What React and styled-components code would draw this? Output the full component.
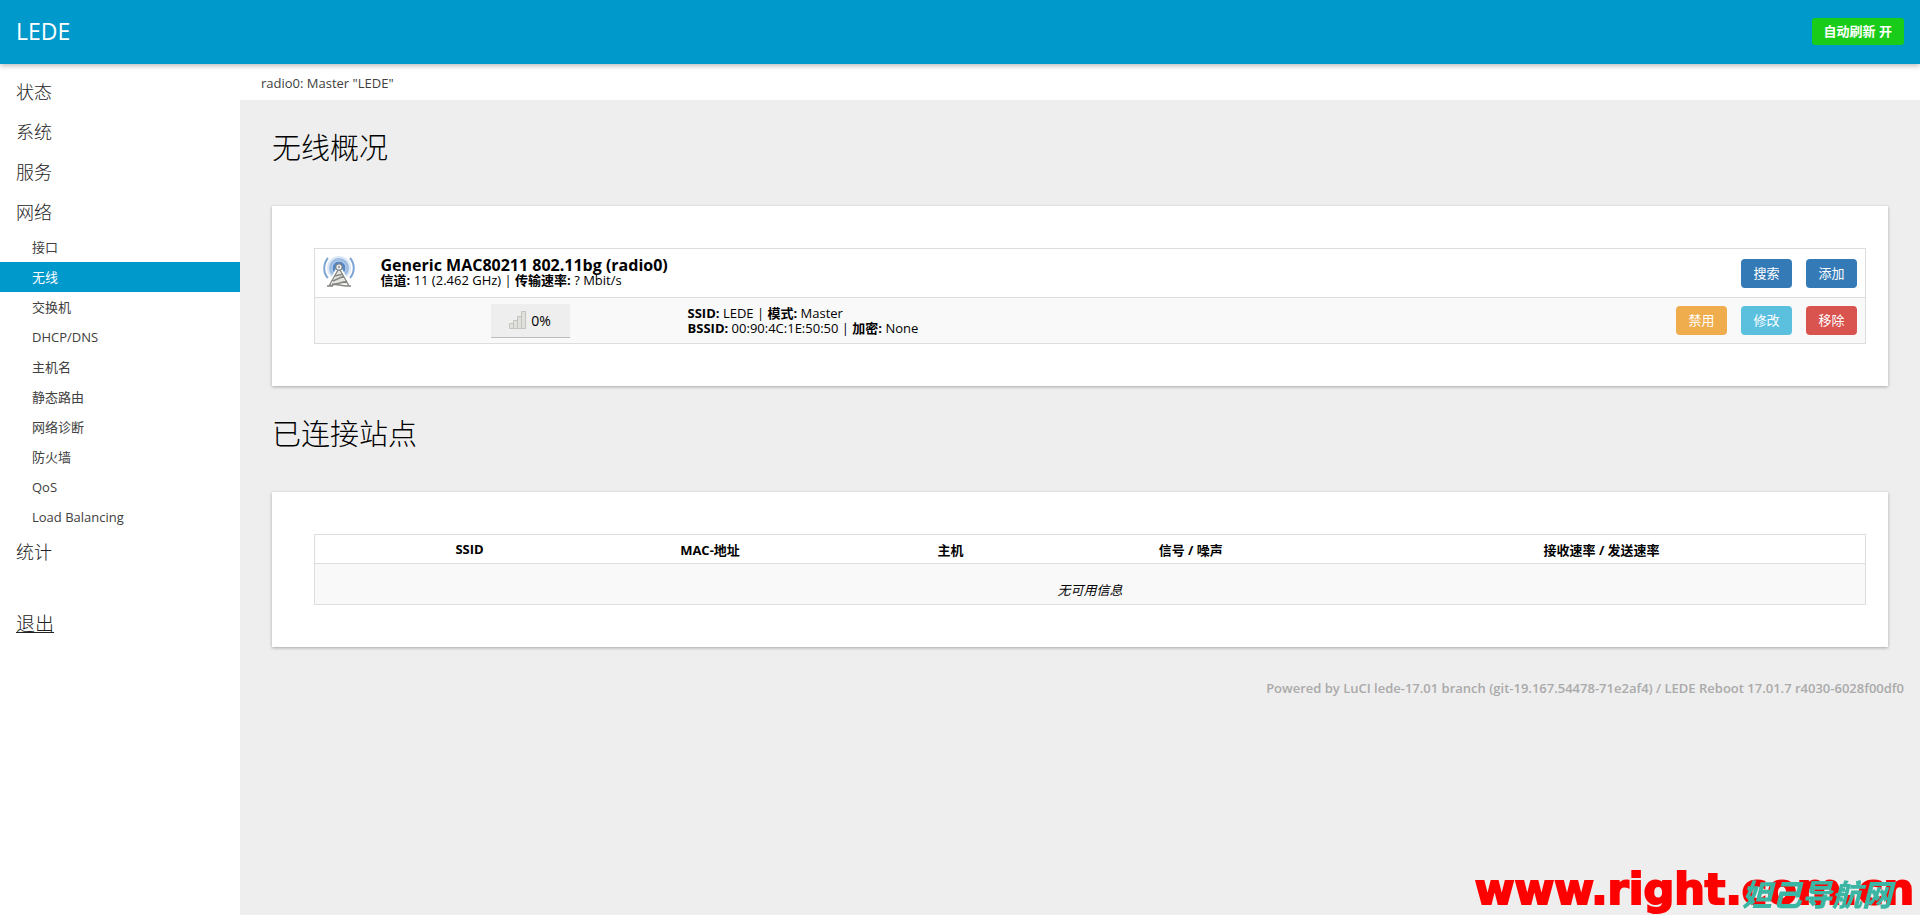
import styled, { createGlobalStyle } from "styled-components";

const PRIMARY_COLOR = "#0099cc";
const TEXT_COLOR = "#404040";
const LINE_COLOR = "#dddddd";

const GlobalStyle = createGlobalStyle`
  * {
    box-sizing: border-box;
  }
  body {
    margin: 0;
    background: #eeeeee;
    color: #000;
    font-family: "Open Sans", "Noto Sans CJK SC", sans-serif;
    font-size: 13px;
  }
`;

/** Layout */
const Page = styled.div`
  display: flex;
  flex-direction: column;
  min-height: 100vh;
`;
const Header = styled.header`
  display: flex;
  align-items: center;
  justify-content: space-between;
  height: 64px;
  padding: 0 16px 2px;
  background: ${PRIMARY_COLOR};
  box-shadow: 0 2px 5px rgba(0, 0, 0, 0.26);
  z-index: 1;
`;
const Brand = styled.a`
  color: white;
  font-size: 23px;
  text-decoration: none;
`;
const RefreshButton = styled.button`
  height: 27px;
  padding: 0 12px;
  border: none;
  border-radius: 3px;
  background: #19cc19;
  color: white;
  font: inherit;
  font-weight: bold;
  line-height: 27px;
`;
const Body = styled.div`
  display: flex;
  flex: 1;
`;
const Main = styled.main`
  flex: 1;
  min-width: 0;
`;
const Container = styled.div`
  padding: 0 32px;
`;

/** Sidebar */
const Sidebar = styled.nav`
  flex: 0 0 240px;
  padding-top: 8px;
  background: white;
`;
const MenuList = styled.ul`
  margin: 0;
  padding: 0;
  list-style: none;
`;
const MenuLink = styled.a`
  display: block;
  padding-left: 16px;
  color: #222222;
  font-size: 18px;
  font-weight: 300;
  line-height: 40px;
  text-decoration: none;
`;
const SubLink = styled.a`
  display: block;
  padding-left: 32px;
  background: ${(props) => (props.$active ? PRIMARY_COLOR : "white")};
  color: ${(props) => (props.$active ? "white" : TEXT_COLOR)};
  line-height: 30px;
  text-decoration: none;
`;
const LogoutLink = styled(MenuLink)`
  margin-top: 32px;
  font-size: 19px;
  text-decoration: underline;
`;

/** Content */
const NetworkTabs = styled.div`
  height: 36px;
  padding-left: 21px;
  background: white;
  line-height: 38px;
`;
const TabLink = styled.a`
  color: ${TEXT_COLOR};
  text-decoration: none;
`;
const Title = styled.h2`
  margin: 0;
  padding: 26px 0 36px;
  font-size: 29px;
  font-weight: 300;
  line-height: 44px;
`;
const Card = styled.section`
  padding: 42px 22px 42px 42px;
  background: white;
  box-shadow: 0 1px 3px rgba(0, 0, 0, 0.3);
`;
const Table = styled.table`
  width: 100%;
  border: 1px solid ${LINE_COLOR};
  border-collapse: collapse;
  table-layout: fixed;
`;
const Row = styled.tr`
  height: ${(props) => props.$height}px;
  background: ${(props) => (props.$shaded ? "#f9f9f9" : "white")};
  border-bottom: 1px solid ${LINE_COLOR};
`;
const Col = styled.col`
  width: ${(props) => props.$width};
`;
const Cell = styled.td`
  padding: 0 4px;
  line-height: 15px;
  text-align: ${(props) => props.$align || "left"};
`;
const IconCell = styled(Cell)`
  padding-left: 8px;
`;
const HeadCell = styled.th`
  padding: 0 4px;
`;
const EmptyCell = styled.td`
  padding: 10px 0 0;
  font-style: italic;
  text-align: center;
`;
const DeviceName = styled.strong`
  display: block;
  font-size: 16px;
`;
const Actions = styled.div`
  display: flex;
  justify-content: flex-end;
  gap: 14px;
  padding-right: 4px;
`;
const ActionButton = styled.button`
  width: 51px;
  height: 29px;
  padding: 0;
  border: none;
  border-radius: 4px;
  background: ${(props) => props.$color};
  color: white;
  font: inherit;
  line-height: 29px;
`;
const SignalBadge = styled.span`
  display: inline-flex;
  align-items: center;
  justify-content: center;
  gap: 5px;
  width: 79px;
  height: 34px;
  background: #eeeeee;
  border-bottom: 1px solid #bbbbbb;
  font-size: 14px;
`;
const Footer = styled.footer`
  padding: 31px 16px;
  color: #aaaaaa;
  font-weight: 600;
  line-height: 20px;
  text-align: right;
`;

/** Site marks over the bottom corner */
const SiteMark = styled.div`
  position: fixed;
  right: 6px;
  bottom: 2px;
  color: red;
  font-family: "DejaVu Sans", sans-serif;
  font-size: 43px;
  font-weight: bold;
  line-height: 48px;
  -webkit-text-stroke: 2px red;
`;
const NavMark = styled.div`
  position: fixed;
  right: 28px;
  bottom: 4px;
  color: #3cb6a4;
  font-family: "Noto Sans CJK SC", sans-serif;
  font-size: 30px;
  font-style: italic;
  font-weight: 900;
  line-height: 36px;
`;

const AntennaIcon = () => (
  <svg width="32" height="32" viewBox="0 0 32 32" fill="none" aria-hidden="true">
    <circle cx="16" cy="12" r="12" fill="#dce8f6" />
    <path d="M5 2C0 8 0 17 5 22M27 2c5 6 5 14 0 20" stroke="#7fa5d4" strokeWidth="2" />
    <circle cx="16" cy="12" r="10" fill="#9dbce2" />
    <circle cx="16" cy="12" r="7" fill="#5487c6" stroke="#c3d8ef" />
    <path d="M15 13 6 30M17 13l9 17" stroke="#fff" strokeWidth="4" />
    <path d="M16 14 9 28h14z" fill="#e4e4e0" />
    <path
      d="M15 14 6 30M17 14l9 16M12 20l8-2M10 25l11-5M6 30l18-5M9 28l14 2M4 30h6M22 30h6"
      stroke="#858781"
      strokeWidth="1.4"
    />
    <circle cx="16" cy="11" r="3.2" fill="#f5f5f3" stroke="#747c85" strokeWidth="1.2" />
    <circle cx="16" cy="11" r="1.2" fill="#9aa0a5" />
  </svg>
);

const SignalIcon = () => (
  <svg width="17" height="18" viewBox="0 0 17 18" aria-hidden="true">
    <g fill="#e0e0dc" stroke="#c4c4be">
      <path d="M.5 12.5h4v5h-4z" />
      <path d="M4.5 9.5h4v8h-4z" />
      <path d="M8.5 5.5h4v12h-4z" />
      <path d="M12.5.5h4v17h-4z" />
    </g>
  </svg>
);

const NETWORK_ITEMS = [
  "接口",
  "无线",
  "交换机",
  "DHCP/DNS",
  "主机名",
  "静态路由",
  "网络诊断",
  "防火墙",
  "QoS",
  "Load Balancing",
];
const MENU = [
  { name: "状态" },
  { name: "系统" },
  { name: "服务" },
  { name: "网络", items: NETWORK_ITEMS },
  { name: "统计" },
];
const STATION_COLUMNS = [
  { name: "", width: "4%" },
  { name: "SSID", width: "12%" },
  { name: "MAC-地址", width: "19%" },
  { name: "主机", width: "12%" },
  { name: "信号 / 噪声", width: "19%" },
  { name: "接收速率 / 发送速率", width: "34%" },
];

const Menu = () => (
  <Sidebar>
    <MenuList>
      {MENU.map(({ name, items }) => (
        <li key={name}>
          <MenuLink href="#">{name}</MenuLink>
          {items && (
            <MenuList>
              {items.map((item) => (
                <li key={item}>
                  <SubLink href="#" $active={item === "无线"}>
                    {item}
                  </SubLink>
                </li>
              ))}
            </MenuList>
          )}
        </li>
      ))}
    </MenuList>
    <LogoutLink href="#">退出</LogoutLink>
  </Sidebar>
);

const WirelessTable = () => (
  <Table>
    <colgroup>
      <Col $width="4%" />
      <Col $width="307px" />
      <Col />
      <Col $width="200px" />
    </colgroup>
    <tbody>
      <Row $height={49}>
        <IconCell>
          <AntennaIcon />
        </IconCell>
        <Cell colSpan={2}>
          <DeviceName>Generic MAC80211 802.11bg (radio0)</DeviceName>
          <strong>信道:</strong> 11 (2.462 GHz) | <strong>传输速率:</strong> ? Mbit/s
        </Cell>
        <Cell>
          <Actions>
            <ActionButton $color="#337ab7">搜索</ActionButton>
            <ActionButton $color="#337ab7">添加</ActionButton>
          </Actions>
        </Cell>
      </Row>
      <Row $height={46} $shaded>
        <Cell />
        <Cell $align="center">
          <SignalBadge>
            <SignalIcon />
            0%
          </SignalBadge>
        </Cell>
        <Cell>
          <strong>SSID:</strong> LEDE | <strong>模式:</strong> Master
          <br />
          <strong>BSSID:</strong> 00:90:4C:1E:50:50 | <strong>加密:</strong> None
        </Cell>
        <Cell>
          <Actions>
            <ActionButton $color="#f0ad4e">禁用</ActionButton>
            <ActionButton $color="#5bc0de">修改</ActionButton>
            <ActionButton $color="#d9534f">移除</ActionButton>
          </Actions>
        </Cell>
      </Row>
    </tbody>
  </Table>
);

const StationTable = () => (
  <Table>
    <colgroup>
      {STATION_COLUMNS.map(({ name, width }) => (
        <Col key={name} $width={width} />
      ))}
    </colgroup>
    <thead>
      <Row $height={29}>
        {STATION_COLUMNS.map(({ name }) => (
          <HeadCell key={name}>{name}</HeadCell>
        ))}
      </Row>
    </thead>
    <tbody>
      <Row $height={41} $shaded>
        <EmptyCell colSpan={STATION_COLUMNS.length}>无可用信息</EmptyCell>
      </Row>
    </tbody>
  </Table>
);

const App = () => {
  return (
    <Page>
      <GlobalStyle />
      <Header>
        <Brand href="#">LEDE</Brand>
        <RefreshButton>自动刷新 开</RefreshButton>
      </Header>
      <Body>
        <Menu />
        <Main>
          <NetworkTabs>
            <TabLink href="#">radio0: Master "LEDE"</TabLink>
          </NetworkTabs>
          <Container>
            <Title>无线概况</Title>
            <Card>
              <WirelessTable />
            </Card>
            <Title>已连接站点</Title>
            <Card>
              <StationTable />
            </Card>
          </Container>
          <Footer>
            Powered by LuCI lede-17.01 branch (git-19.167.54478-71e2af4) / LEDE Reboot 17.01.7
            r4030-6028f00df0
          </Footer>
        </Main>
      </Body>
      <SiteMark>www.right.com.cn</SiteMark>
      <NavMark>妲己导航网</NavMark>
    </Page>
  );
};

export default App;
